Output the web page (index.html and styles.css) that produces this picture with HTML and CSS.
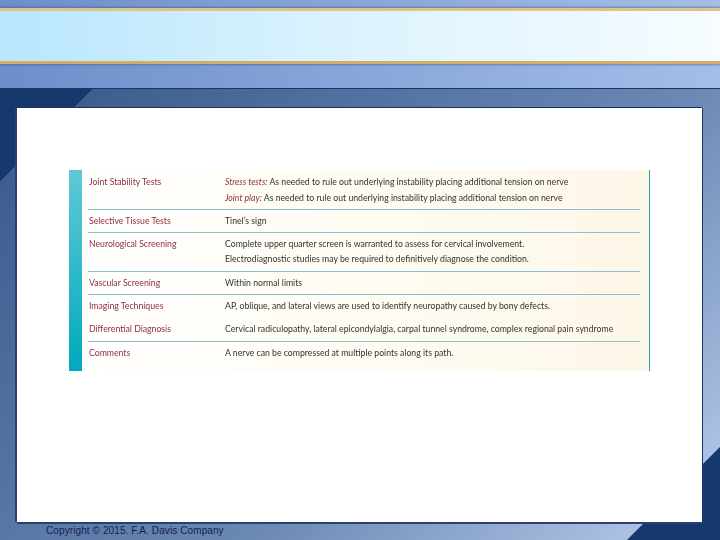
FILE: index.html
```html
<!DOCTYPE html>
<html lang="en">
<head>
<meta charset="utf-8">
<title>Copyright 2015. F.A. Davis Company</title>
<link rel="stylesheet" href="styles.css">
</head>
<body>
<div class="slide">
  <header class="top">
    <div class="banner"></div>
  </header>
  <main class="stage">
    <section class="card">
      <div class="figure">
        <div class="strip"></div>
        <div class="rows">
          <div class="row r1 line">
            <div class="label">Joint Stability Tests</div>
            <div class="body">
              <p class="gap"><em>Stress tests:</em> As needed to rule out underlying instability placing additional tension on nerve</p>
              <p><em>Joint play:</em> As needed to rule out underlying instability placing additional tension on nerve</p>
            </div>
          </div>
          <div class="row r2 line">
            <div class="label">Selective Tissue Tests</div>
            <div class="body"><p>Tinel’s sign</p></div>
          </div>
          <div class="row r3 line">
            <div class="label">Neurological Screening</div>
            <div class="body">
              <p>Complete upper quarter screen is warranted to assess for cervical involvement.</p>
              <p>Electrodiagnostic studies may be required to definitively diagnose the condition.</p>
            </div>
          </div>
          <div class="row r2 line">
            <div class="label">Vascular Screening</div>
            <div class="body"><p>Within normal limits</p></div>
          </div>
          <div class="row r2">
            <div class="label">Imaging Techniques</div>
            <div class="body"><p>AP, oblique, and lateral views are used to identify neuropathy caused by bony defects.</p></div>
          </div>
          <div class="row r6 line">
            <div class="label">Differential Diagnosis</div>
            <div class="body"><p>Cervical radiculopathy, lateral epicondylalgia, carpal tunnel syndrome, complex regional pain syndrome</p></div>
          </div>
          <div class="row r7">
            <div class="label">Comments</div>
            <div class="body"><p>A nerve can be compressed at multiple points along its path.</p></div>
          </div>
        </div>
      </div>
    </section>
    <footer class="copy">Copyright © 2015. F.A. Davis Company</footer>
  </main>
</div>
</body>
</html>
```
FILE: styles.css
```css
* { box-sizing: border-box; }
html, body { margin: 0; padding: 0; }
body { width: 720px; height: 540px; overflow: hidden; background: #17376f; }

.slide { width: 720px; height: 540px; display: flex; flex-direction: column; }

.top {
  height: 88px;
  padding-top: 8px;
  background: linear-gradient(90deg, #6c8ecb 0%, #a4bee9 100%);
}
.banner {
  height: 56px;
  border-top: 3px solid #dcc48a;
  border-bottom: 3px solid #d2ae68;
  background: linear-gradient(90deg, #b8e6fd 0%, #ddf3fe 50%, #f6fcff 100%);
  box-shadow: 0 -1px 2px rgba(70, 70, 70, .45), 0 1px 2px rgba(70, 80, 110, .5);
}

.stage {
  height: 452px;
  padding: 20px 18px 0 17px;
  display: flex;
  flex-direction: column;
  background: linear-gradient(135deg, #17376f 0%, #17376f 7.85%, #3e5e90 7.95%, #6c88b4 60%, #abc1e2 92%, #17376f 92.1%, #17376f 100%);
  border-top: 1px solid #1c3560;
}
.card {
  height: 414px;
  flex: none;
  margin-top: -1px;
  padding: 62px 0 0 52px;
  background: #fff;
  box-shadow: -2px 0 0 #2b4070, 0 -1px 0 #1c2f5c, 1px 0 0 #1f3566, 0 2px 0 #2b4070;
}
.figure {
  width: 581px;
  height: 201px;
  display: flex;
  background: linear-gradient(90deg, #fff 0%, #fffdf7 30%, #fdf7e8 100%);
  border-right: 1px solid #2a9db0;
  filter: blur(.45px);
}
.strip {
  width: 13px;
  flex: none;
  background: linear-gradient(180deg, #60c9d6 0%, #00a9bc 100%);
}
.rows { width: 552px; margin-left: 6px; }
.row {
  display: grid;
  grid-template-columns: 136px 1fr;
  font: 8.7px/15px Lato, "Liberation Sans", sans-serif;
  padding: 3px 0 0 1px;
}
.line { border-bottom: 1px solid #86c3cf; }
.r1 { height: 40px; padding-top: 4px; }
.r2 { height: 23px; }
.r3 { height: 39px; }
.r6 { height: 24px; }
.r7 { height: 29px; padding-top: 3px; }
.label { color: #8d3040; }
.body { color: #35322f; }
.body p { margin: 0; }
.body .gap { margin-bottom: 1px; }
.body em { color: #8d3040; font-style: italic; }

.copy {
  margin: 3px 0 0 29px;
  font: 10px/11px "Liberation Sans", sans-serif;
  letter-spacing: .1px;
  color: #101f4d;
  white-space: nowrap;
}
```
